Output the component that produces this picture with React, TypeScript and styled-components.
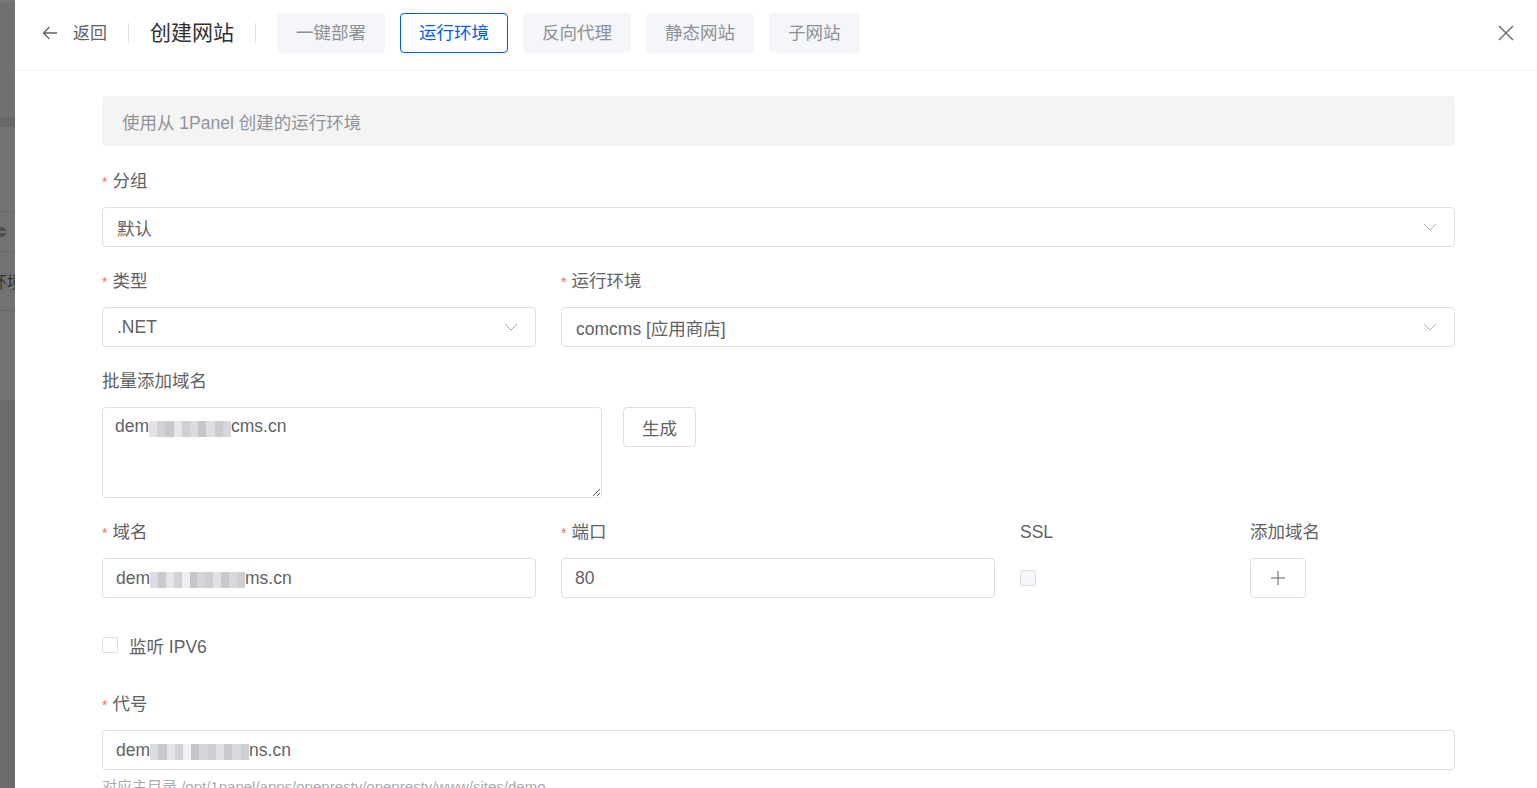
import React from "react";
import styled, { createGlobalStyle } from "styled-components";

const GlobalStyle = createGlobalStyle`
  html, body, #root {
    height: 100%;
    margin: 0;
  }
  body {
    font-family: "Liberation Sans", "Noto Sans CJK SC", sans-serif;
    background: #fff;
    overflow: hidden;
  }
  * {
    box-sizing: border-box;
  }
`;

const Screen = styled.div`
  display: flex;
  height: 100vh;
  overflow: hidden;
`;

/* the page behind the drawer, seen through the mask */
const Backdrop = styled.div`
  width: 15px;
  flex-shrink: 0;
  display: flex;
  flex-direction: column;
  background: #6b6b6b;
  overflow: hidden;
`;

const BgBand = styled.div<{ $h: number; $bg: string; $line?: boolean }>`
  height: ${(p) => p.$h}px;
  flex-shrink: 0;
  background: ${(p) => p.$bg};
  border-bottom: ${(p) => (p.$line ? "1px solid #676767" : "none")};
  display: flex;
  align-items: center;
  justify-content: flex-end;
  overflow: hidden;
`;

const SortIcon = styled.div`
  margin-right: auto;
  display: flex;
  flex-direction: column;
  gap: 2px;

  &::before,
  &::after {
    content: "";
    display: block;
    border-left: 5px solid transparent;
    border-right: 5px solid transparent;
    margin-left: -3px;
  }
  &::before {
    border-bottom: 5px solid #4f4f4f;
  }
  &::after {
    border-top: 5px solid #4f4f4f;
  }
`;

const BgText = styled.span`
  font-size: 16px;
  color: #343434;
  white-space: nowrap;
  margin-right: -8px;
`;

const Drawer = styled.div`
  flex: 1;
  min-width: 0;
  display: flex;
  flex-direction: column;
  background: #fff;
`;

const Header = styled.header`
  height: 71px;
  flex-shrink: 0;
  display: flex;
  align-items: center;
  padding: 0 23px 5px 27px;
  border-bottom: 1px solid #ebeef5;
`;

const Back = styled.div`
  display: flex;
  align-items: center;
  gap: 15px;
  font-size: 17px;
  color: #606266;
  cursor: pointer;

  span {
    padding-bottom: 3px;
  }
`;

const VDivider = styled.div`
  width: 1px;
  height: 20px;
  background: #dcdfe6;
  margin: 0 21px;
`;

const Title = styled.div`
  font-size: 21px;
  color: #303133;
  padding-bottom: 3px;
`;

const Tabs = styled.div`
  display: flex;
  gap: 15px;
`;

const Tab = styled.button<{ $active?: boolean }>`
  height: 40px;
  padding: 0 18px 3px;
  border-radius: 4px;
  font-family: inherit;
  font-size: 17.5px;
  cursor: pointer;
  border: 1px solid ${(p) => (p.$active ? "#005eeb" : "transparent")};
  background: ${(p) => (p.$active ? "#fff" : "#f4f6f9")};
  color: ${(p) => (p.$active ? "#005eeb" : "#8d9095")};
`;

const Close = styled.div`
  margin-left: auto;
  display: flex;
  color: #6e7179;
  cursor: pointer;
`;

const Body = styled.div`
  flex: 1;
  overflow: hidden;
  padding: 25px 82px 0 87px;
  font-size: 17.5px;
`;

const Alert = styled.div`
  height: 50px;
  border-radius: 4px;
  background: #f4f4f5;
  color: #909399;
  display: flex;
  align-items: center;
  padding: 0 20px;
  margin-bottom: 19px;
`;

const FormItem = styled.div`
  margin-bottom: 18px;
`;

const Label = styled.div<{ $required?: boolean }>`
  height: 32px;
  line-height: 32px;
  margin-bottom: 10px;
  color: #606266;
  white-space: nowrap;

  &::before {
    content: ${(p) => (p.$required ? '"*"' : "none")};
    color: #f56c6c;
    margin-right: 5px;
    font-size: 14px;
  }
`;

const Grid = styled.div<{ $cols: string }>`
  display: grid;
  grid-template-columns: ${(p) => p.$cols};
  column-gap: 25px;
`;

const Field = styled.div`
  height: 40px;
  border: 1px solid #dcdfe6;
  border-radius: 4px;
  display: flex;
  align-items: center;
  padding: 0 13px;
  color: #606266;
  white-space: nowrap;
  overflow: hidden;
`;

const SelectBox = styled(Field)`
  padding: 0 17px 0 14px;
  justify-content: space-between;
`;

const Chevron = () => (
  <svg width="14" height="14" viewBox="0 0 14 14" fill="none">
    <polyline points="1,4 7,10 13,4" stroke="#a8abb2" strokeWidth="1" />
  </svg>
);

const Select = ({ value }: { value: string }) => (
  <SelectBox>
    <span>{value}</span>
    <Chevron />
  </SelectBox>
);

const TextRow = styled.div`
  display: flex;
  align-items: flex-start;
  gap: 21px;
`;

const TextArea = styled.div`
  width: 500px;
  height: 91px;
  border: 1px solid #dcdfe6;
  border-radius: 4px;
  padding: 7px 12px;
  line-height: 22px;
  color: #606266;
  resize: both;
  overflow: hidden;
  white-space: nowrap;
`;

const Button = styled.button<{ $w?: number }>`
  height: 40px;
  min-width: ${(p) => (p.$w ? `${p.$w}px` : "auto")};
  padding: 0 18px;
  border: 1px solid #dcdfe6;
  border-radius: 4px;
  background: #fff;
  font-family: inherit;
  font-size: 17.5px;
  color: #606266;
  display: inline-flex;
  align-items: center;
  justify-content: center;
  cursor: pointer;
`;

const Check = styled.span<{ $disabled?: boolean }>`
  width: 16px;
  height: 16px;
  flex-shrink: 0;
  border: 1px solid #dcdfe6;
  border-radius: 2px;
  background: ${(p) => (p.$disabled ? "#f5f7fa" : "#fff")};
`;

const CheckCell = styled.div`
  height: 40px;
  display: flex;
  align-items: center;
`;

const CheckRow = styled.label`
  height: 32px;
  margin: 31px 0 27px;
  display: flex;
  align-items: center;
  gap: 11px;
  color: #606266;
`;

const Hint = styled.div`
  margin-top: 7px;
  font-size: 15px;
  line-height: 20px;
  color: #a8abb2;
  white-space: nowrap;
`;

const MosaicBlock = styled.span<{ $w: number }>`
  display: inline-block;
  width: ${(p) => p.$w}px;
  height: 16px;
  vertical-align: middle;
  margin-top: 4px;
`;

const Mosaic = ({ w, tones }: { w: number; tones: string[] }) => {
  const step = 100 / tones.length;
  const stops = tones
    .map((t, i) => `${t} ${(i * step).toFixed(1)}%, ${t} ${((i + 1) * step).toFixed(1)}%`)
    .join(", ");
  return <MosaicBlock $w={w} style={{ background: `linear-gradient(90deg, ${stops})` }} />;
};

const BackArrow = () => (
  <svg width="16" height="16" viewBox="0 0 16 16" fill="none">
    <path d="M15 8H1.5M7.5 2L1.5 8l6 6" stroke="#606266" strokeWidth="1.3" />
  </svg>
);

const CloseIcon = () => (
  <svg width="16" height="16" viewBox="0 0 16 16" fill="none">
    <path d="M1 1l14 14M15 1L1 15" stroke="currentColor" strokeWidth="1.5" />
  </svg>
);

const PlusIcon = () => (
  <svg width="14" height="14" viewBox="0 0 14 14" fill="none">
    <path d="M7 0v14M0 7h14" stroke="#606266" strokeWidth="1" />
  </svg>
);

const toneA = ["#e3e3e5", "#d2d3d6", "#c7c8cc", "#e6e6e8", "#cfd0d3", "#d9dadc", "#c4c5c9", "#dedfe1", "#cbccd0", "#d6d7da"];
const toneB = ["#dcdde0", "#c9cace", "#e4e4e6", "#d1d2d5", "#f0f0f2", "#c6c7cb", "#d4d5d8", "#cdced2", "#e0e1e3", "#c8c9cd", "#d8d9dc", "#cfd0d4"];

export default function App() {
  const tabs = ["一键部署", "运行环境", "反向代理", "静态网站", "子网站"];

  return (
    <>
      <GlobalStyle />
      <Screen>
        <Backdrop>
          <BgBand $h={3} $bg="#777777" />
          <BgBand $h={114} $bg="#707070" />
          <BgBand $h={10} $bg="#686868" />
          <BgBand $h={85} $bg="#727272" $line />
          <BgBand $h={40} $bg="#727272" $line>
            <SortIcon />
          </BgBand>
          <BgBand $h={59} $bg="#727272" $line>
            <BgText>运行环境</BgText>
          </BgBand>
          <BgBand $h={89} $bg="#727272" />
        </Backdrop>

        <Drawer>
          <Header>
            <Back>
              <BackArrow />
              <span>返回</span>
            </Back>
            <VDivider />
            <Title>创建网站</Title>
            <VDivider />
            <Tabs>
              {tabs.map((t) => (
                <Tab key={t} $active={t === "运行环境"}>
                  {t}
                </Tab>
              ))}
            </Tabs>
            <Close>
              <CloseIcon />
            </Close>
          </Header>

          <Body>
            <Alert>使用从 1Panel 创建的运行环境</Alert>

            <FormItem>
              <Label $required>分组</Label>
              <Select value="默认" />
            </FormItem>

            <FormItem>
              <Grid $cols="434px 1fr">
                <div>
                  <Label $required>类型</Label>
                  <Select value=".NET" />
                </div>
                <div>
                  <Label $required>运行环境</Label>
                  <Select value="comcms [应用商店]" />
                </div>
              </Grid>
            </FormItem>

            <FormItem>
              <Label>批量添加域名</Label>
              <TextRow>
                <TextArea>
                  dem
                  <Mosaic w={82} tones={toneA} />
                  cms.cn
                </TextArea>
                <Button>生成</Button>
              </TextRow>
            </FormItem>

            <FormItem>
              <Grid $cols="434px 434px 205px 1fr">
                <div>
                  <Label $required>域名</Label>
                  <Field>
                    dem
                    <Mosaic w={95} tones={toneB} />
                    ms.cn
                  </Field>
                </div>
                <div>
                  <Label $required>端口</Label>
                  <Field>80</Field>
                </div>
                <div>
                  <Label>SSL</Label>
                  <CheckCell>
                    <Check $disabled />
                  </CheckCell>
                </div>
                <div>
                  <Label>添加域名</Label>
                  <Button $w={56}>
                    <PlusIcon />
                  </Button>
                </div>
              </Grid>
            </FormItem>

            <CheckRow>
              <Check />
              <span>监听 IPV6</span>
            </CheckRow>

            <FormItem>
              <Label $required>代号</Label>
              <Field>
                dem
                <Mosaic w={99} tones={toneB} />
                ns.cn
              </Field>
              <Hint>对应主目录 /opt/1panel/apps/openresty/openresty/www/sites/demo</Hint>
            </FormItem>
          </Body>
        </Drawer>
      </Screen>
    </>
  );
}
